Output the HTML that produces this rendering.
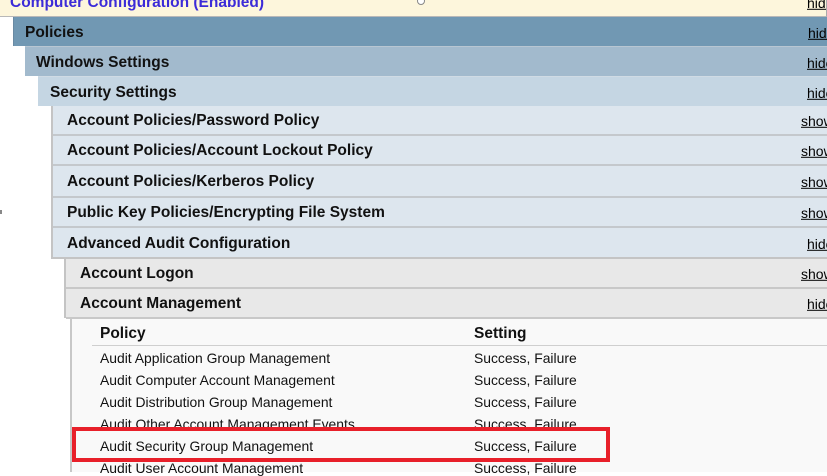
<!DOCTYPE html>
<html><head><style>
body{margin:0;width:827px;height:472px;overflow:hidden;background:#fff;font-family:"Liberation Sans",Arial,sans-serif;position:relative}
.r{position:absolute;right:0;font-weight:bold;font-size:15.5px;color:#111;box-sizing:border-box}
.r span{position:absolute;top:50%;transform:translateY(-45%)}
.r a{position:absolute;top:50%;transform:translateY(-45%);font-weight:normal;color:#000;text-decoration:underline;font-size:14px}
.t{position:absolute;font-size:13.9px;color:#111}
</style></head><body>
<div class="r" style="left:0;top:0;height:17px;background:#fdf6dc;border-bottom:1px solid #b8b8b8;border-right:1px solid #aaa;overflow:hidden">
<span style="left:10px;top:2px;color:#3c2bd8;font-weight:bold;">Computer Configuration (Enabled)</span><a style="left:807px;top:2px">hide</a></div>
<div style="position:absolute;left:417px;top:-3px;width:6px;height:6px;border:1px solid #888;border-radius:50%;background:#fff"></div>
<div class="r" style="left:13px;top:17px;height:29px;background:#7198b3;border-left:1px solid #6a8aa3"><span style="left:11px">Policies</span><a style="left:794px">hide</a></div>
<div class="r" style="left:25px;top:46px;height:30px;background:#a2bacd;border-top:1px solid #b8c6d2"><span style="left:11px">Windows Settings</span><a style="left:782px">hide</a></div>
<div class="r" style="left:38px;top:76px;height:30px;background:#c5d6e3;border-top:1px solid #d0dbe4"><span style="left:12px">Security Settings</span><a style="left:769px">hide</a></div>
<div style="position:absolute;left:51px;top:106px;right:0;height:151px;border-left:2px solid #c4c4c4;border-bottom:2px solid #c4c4c4;background:#dde6ee"></div>
<div class="r" style="left:53px;top:106px;height:30px;border-bottom:2px solid #c4c8cc"><span style="left:14px">Account Policies/Password Policy</span><a style="left:748px">show</a></div>
<div class="r" style="left:53px;top:136px;height:30px;border-bottom:2px solid #c4c8cc"><span style="left:14px">Account Policies/Account Lockout Policy</span><a style="left:748px">show</a></div>
<div class="r" style="left:53px;top:166px;height:32px;border-bottom:2px solid #c4c8cc"><span style="left:14px">Account Policies/Kerberos Policy</span><a style="left:748px">show</a></div>
<div class="r" style="left:53px;top:198px;height:30px;border-bottom:2px solid #c4c8cc"><span style="left:14px">Public Key Policies/Encrypting File System</span><a style="left:748px">show</a></div>
<div class="r" style="left:53px;top:228px;height:29px;"><span style="left:14px">Advanced Audit Configuration</span><a style="left:754px">hide</a></div>
<div style="position:absolute;left:64px;top:259px;right:0;height:59px;border-left:2px solid #c4c4c4;background:#e8e8e8"></div>
<div class="r" style="left:66px;top:259px;height:30px;border-bottom:2px solid #c8c8c8"><span style="left:14px">Account Logon</span><a style="left:735px">show</a></div>
<div class="r" style="left:66px;top:289px;height:30px;border-bottom:2px solid #c8c8c8"><span style="left:14px">Account Management</span><a style="left:741px">hide</a></div>
<div style="position:absolute;left:70px;top:319px;right:0;bottom:0;border-left:2px solid #c8c8c8;background:#f9f9f9"></div>
<div style="position:absolute;left:92px;top:345px;right:0;height:1px;background:#cfcfcf"></div>
<div class="t" style="left:100px;top:325px;font-weight:bold;font-size:15.5px">Policy</div>
<div class="t" style="left:474px;top:325px;font-weight:bold;font-size:15.5px">Setting</div>
<div class="t" style="left:100px;top:350px">Audit Application Group Management</div><div class="t" style="left:474px;top:350px">Success, Failure</div>
<div class="t" style="left:100px;top:372px">Audit Computer Account Management</div><div class="t" style="left:474px;top:372px">Success, Failure</div>
<div class="t" style="left:100px;top:394px">Audit Distribution Group Management</div><div class="t" style="left:474px;top:394px">Success, Failure</div>
<div class="t" style="left:100px;top:416px">Audit Other Account Management Events</div><div class="t" style="left:474px;top:416px">Success, Failure</div>
<div class="t" style="left:100px;top:460px">Audit User Account Management</div><div class="t" style="left:474px;top:460px">Success, Failure</div>
<div style="position:absolute;left:72px;top:427px;width:530px;height:27px;border:4px solid #e8202a;background:#f9f9f9"></div>
<div class="t" style="left:100px;top:438px">Audit Security Group Management</div><div class="t" style="left:474px;top:438px">Success, Failure</div>
<div style="position:absolute;left:0;top:210px;width:2px;height:4px;background:#888"></div>
</body></html>
